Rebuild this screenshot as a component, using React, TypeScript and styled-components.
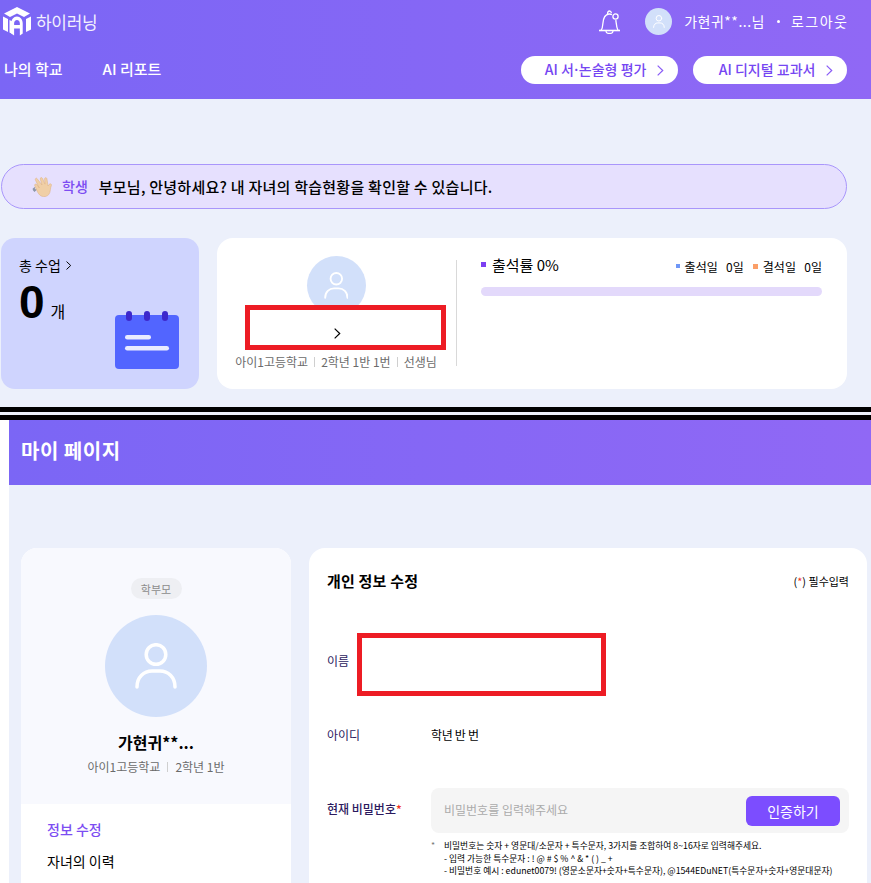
import styled, { createGlobalStyle } from 'styled-components'

const GlobalStyle = createGlobalStyle`
  html, body {
    margin: 0;
    padding: 0;
    background: #ffffff;
  }

  body {
    font-family: 'Noto Sans CJK KR', 'Noto Sans', sans-serif;
    color: #000000;
  }

  * {
    box-sizing: border-box;
  }
`

const UserIcon = ({ height, stroke }: { height: number; stroke: number }) => (
  <svg width={(height * 42) / 46} height={height} viewBox="0 0 42 46" fill="none" stroke="#ffffff" strokeWidth={stroke} strokeLinecap="round">
    <circle cx="21" cy="11.500" r="9.800" />
    <path d="M2 44c0-10 7-16 15-16h8c8 0 15 6 15 16" />
  </svg>
)

const Chevron = ({ color = '#000000', height = 11 }: { color?: string; height?: number }) => (
  <svg width={height * 0.6} height={height} viewBox="0 0 6 10" fill="none" stroke={color} strokeWidth="1.1">
    <path d="M.6.6 5.2 5 .6 9.4" />
  </svg>
)

const LogoMark = () => (
  <svg width="28" height="30" viewBox="0 0 28 30" fill="#ffffff">
    <path d="M14 0 27 6.500 21 10 14 6.500 7 10 1 6.500Z" />
    <path d="M0 9.500 5 12v13l-5-2.500ZM6.500 13l2.500 1.200v12.600l-2.500-1.300Z" />
    <path d="M28 9.500 23 12v13l5-2.500Z" />
    <path d="M14 9c4 0 7 3 7 7v10l-3.500 2v-7h-7v7L7 26V16c0-4 3-7 7-7Zm0 3.500c-2 0-3.500 1.500-3.500 3.500v1.500h7V16c0-2-1.500-3.500-3.500-3.500Z" fillRule="evenodd" transform="translate(2.500 .5) scale(.82 1)" />
  </svg>
)

const Bell = () => (
  <svg width="23" height="24" viewBox="0 0 23 24" fill="none" stroke="#ffffff" strokeWidth="1.300">
    <path d="M1 20.500h21" strokeWidth="1.600" />
    <path d="M3 20.500c1.500-2 1.700-4 1.900-7 .3-4.500 1.500-9 6.100-9.500 1.200-.1 2 .1 3 .6" />
    <path d="M17.800 10c.4 2 .4 7 2.200 10.500" />
    <path d="M8 21c0 2 1.500 2.500 3.500 2.500S15 23 15 21" />
    <path d="M9.500 4c.1-2 .9-3 2-3s1.700.8 1.900 2" />
    <circle cx="17.500" cy="6.500" r="2.600" fill="#8b66f5" />
  </svg>
)

const WaveHand = () => (
  <svg width="21" height="21" viewBox="0 0 21 21">
    <path d="M.8 13.500 3 11.500M2 15.500l2.500-2.200M1.200 14.500l1.800-1.500" stroke="#8d97a8" strokeWidth="1.200" />
    <path d="M5 2.500 10 9 8.300 3.200c-.5-1.600 1.500-2.300 2.200-.8L13 8.200l-.4-5.300c0-1.500 2-1.700 2.300-.2l1.200 7.300c.5-1 1.300-2.200 2.200-2.200 1.100 0 1.400 1 1 2-1 2.300-.8 4.600-1.500 6.800-1 3-3.800 4.400-6.600 4-3-.4-4.300-2.300-5.500-4.300L2.800 9.800c-.8-1.300 1-2.600 2-1.300L7.300 12 3.500 4.300C2.700 2.700 4.200 1.500 5 2.500Z" fill="#f0cfa6" stroke="#dcae7d" strokeWidth=".5" />
  </svg>
)

const CalendarIcon = () => (
  <svg width="64" height="58" viewBox="0 0 64 58">
    <rect y="4" width="64" height="54" rx="4" fill="#5265ff" />
    <rect x="11" width="6" height="10" rx="3" fill="#3d28cc" />
    <rect x="29" width="6" height="10" rx="3" fill="#3d28cc" />
    <rect x="47" width="6" height="10" rx="3" fill="#3d28cc" />
    <rect x="10" y="24" width="26" height="4.500" rx="2.250" fill="#e9ebff" />
    <rect x="10" y="35" width="44" height="4.500" rx="2.250" fill="#e9ebff" />
  </svg>
)

export default function App() {
  return (
    <>
      <GlobalStyle />
      <Page>
        <Dashboard>
          <Header>
            <TopRow>
              <Logo>
                <LogoMark />
                <LogoText>하이러닝</LogoText>
              </Logo>
              <UserArea>
                <BellSlot>
                  <Bell />
                </BellSlot>
                <HeaderAvatar>
                  <UserIcon height={13} stroke={3.500} />
                </HeaderAvatar>
                <UserName>가현귀**...님</UserName>
                <Dot />
                <Logout>로그아웃</Logout>
              </UserArea>
            </TopRow>
            <NavRow>
              <Nav>
                <NavItem>나의 학교</NavItem>
                <NavItem>AI 리포트</NavItem>
              </Nav>
              <Shortcuts>
                <PillLink $width={157}>
                  <span>
                    AI 서<MiddleDot>·</MiddleDot>논술형 평가
                  </span>
                  <Chevron color="#8a5cf6" />
                </PillLink>
                <PillLink $width={154}>
                  <span>AI 디지털 교과서</span>
                  <Chevron color="#8a5cf6" />
                </PillLink>
              </Shortcuts>
            </NavRow>
          </Header>

          <DashboardBody>
            <Banner>
              <WaveHand />
              <BannerRole>학생</BannerRole>
              <BannerText>부모님, 안녕하세요? 내 자녀의 학습현황을 확인할 수 있습니다.</BannerText>
            </Banner>

            <Cards>
              <CountCard>
                <CountLabel>
                  총 수업 <Chevron height={9} />
                </CountLabel>
                <CountValue>
                  <strong>0</strong>
                  <span>개</span>
                </CountValue>
                <CalendarSlot>
                  <CalendarIcon />
                </CalendarSlot>
              </CountCard>

              <SummaryCard>
                <StudentBox>
                  <StudentAvatar>
                    <UserIcon height={27} stroke={3.200} />
                  </StudentAvatar>
                  <MaskBox $left={10} $top={45} $width={201} $height={45}>
                    <MaskedChevron>
                      <Chevron height={11} />
                    </MaskedChevron>
                  </MaskBox>
                  <SchoolLine>
                    아이1고등학교<Sep />2학년 1반 1번<Sep />선생님
                  </SchoolLine>
                </StudentBox>
                <Attendance>
                  <AttendanceHead>
                    <RateLabel>
                      <Square $color="#7c3ff2" $size={5} />
                      출석률 0%
                    </RateLabel>
                    <Legend>
                      <LegendItem>
                        <Square $color="#6f97f7" $size={4} />
                        출석일 &nbsp;0일
                      </LegendItem>
                      <LegendItem>
                        <Square $color="#fb9f68" $size={5} />
                        결석일 &nbsp;0일
                      </LegendItem>
                    </Legend>
                  </AttendanceHead>
                  <RateBar />
                </Attendance>
              </SummaryCard>
            </Cards>
          </DashboardBody>
        </Dashboard>

        <BlackRule />
        <RuleGap />
        <BlackRule />

        <MyPage>
          <TitleBand>마이 페이지</TitleBand>
          <MyPageBody>
            <Sidebar>
              <ProfileBox>
                <RoleTag>학부모</RoleTag>
                <ProfileAvatar>
                  <UserIcon height={46} stroke={3.500} />
                </ProfileAvatar>
                <ProfileName>가현귀**...</ProfileName>
                <ProfileSchool>
                  아이1고등학교<Sep />2학년 1반
                </ProfileSchool>
              </ProfileBox>
              <SideMenu>
                <SideMenuItem $active>정보 수정</SideMenuItem>
                <SideMenuItem>자녀의 이력</SideMenuItem>
              </SideMenu>
            </Sidebar>

            <FormCard>
              <FormHead>
                <FormTitle>개인 정보 수정</FormTitle>
                <RequiredNote>
                  (<Star>*</Star>) 필수입력
                </RequiredNote>
              </FormHead>

              <NameRow>
                <FieldLabel>이름</FieldLabel>
                <MaskBox $left={30} $top={0} $width={249} $height={63} />
              </NameRow>

              <IdRow>
                <FieldLabel>아이디</FieldLabel>
                <FieldValue>학년 반 번</FieldValue>
              </IdRow>

              <PasswordRow>
                <FieldLabel $bold>
                  현재 비밀번호<Star>*</Star>
                </FieldLabel>
                <PasswordField>
                  <PasswordBox>
                    <Placeholder>비밀번호를 입력해주세요</Placeholder>
                    <VerifyButton>인증하기</VerifyButton>
                  </PasswordBox>
                  <Notes>
                    <NoteLine $bullet>비밀번호는 숫자 + 영문대/소문자 + 특수문자, 3가지를 조합하여 8~16자로 입력해주세요.</NoteLine>
                    <NoteLine>- 입력 가능한 특수문자 : ! @ # $ % ^ &amp; * ( ) _ +</NoteLine>
                    <NoteLine>- 비밀번호 예시 : edunet0079! (영문소문자+숫자+특수문자), @1544EDuNET(특수문자+숫자+영문대문자)</NoteLine>
                  </Notes>
                </PasswordField>
              </PasswordRow>
            </FormCard>
          </MyPageBody>
        </MyPage>
      </Page>
    </>
  )
}

const Page = styled.div`
  width: 871px;
  height: 883px;
  overflow: hidden;
  background: #ffffff;
`

const Dashboard = styled.div`
  height: 407px;
  background: #ecf0fb;
`

const Header = styled.header`
  height: 99px;
  padding: 7px 24px 0 3px;
  background: linear-gradient(90deg, #7b66f5 0%, #9068f5 100%);
  color: #ffffff;
`

const TopRow = styled.div`
  display: flex;
  align-items: center;
  justify-content: space-between;
  height: 29px;
`

const Logo = styled.div`
  display: flex;
  align-items: center;
  gap: 5px;
`

const LogoText = styled.span`
  font-size: 17px;
  line-height: 20px;
  letter-spacing: -0.3px;
  opacity: 0.9;
`

const UserArea = styled.div`
  display: flex;
  align-items: center;
`

const BellSlot = styled.div`
  display: flex;
  margin-right: 24px;
`

const HeaderAvatar = styled.div`
  display: flex;
  align-items: center;
  justify-content: center;
  width: 27px;
  height: 27px;
  margin-right: 12px;
  border-radius: 50%;
  background: #d2e0fa;
`

const UserName = styled.span`
  padding-bottom: 2px;
  font-size: 14px;
  line-height: 20px;
  letter-spacing: 0.5px;
`

const Logout = styled.span`
  margin-right: -1.500px;
  padding-bottom: 2px;
  font-size: 14px;
  line-height: 20px;
  letter-spacing: 1.500px;
`

const Dot = styled.span`
  width: 3px;
  height: 3px;
  margin: 0 11px 0 12px;
  border-radius: 50%;
  background: #ffffff;
`

const NavRow = styled.div`
  display: flex;
  align-items: center;
  justify-content: space-between;
  height: 28px;
  margin-top: 20px;
`

const Nav = styled.nav`
  display: flex;
  gap: 40px;
  padding: 0 0 3px 1px;
`

const NavItem = styled.span`
  font-size: 15px;
  font-weight: 500;
  line-height: 20px;
`

const Shortcuts = styled.div`
  display: flex;
  gap: 15px;
`

const PillLink = styled.div<{ $width: number }>`
  display: flex;
  align-items: center;
  justify-content: flex-end;
  gap: 11px;
  width: ${({ $width }) => $width}px;
  height: 28px;
  padding-right: 14px;
  border-radius: 14px;
  background: #ffffff;
  color: #7546f2;
  font-size: 14px;
  font-weight: 500;

  span {
    padding-bottom: 2px;
  }
`

const MiddleDot = styled.i`
  margin: 0 -1.500px;
  font-style: normal;
`

const DashboardBody = styled.div`
  padding: 65px 24px 0 1px;
`

const Banner = styled.div`
  display: flex;
  align-items: center;
  height: 45px;
  padding-left: 30px;
  border: 1px solid #a996fb;
  border-radius: 23px;
  background: #e6e0fe;
`

const BannerRole = styled.span`
  margin: 0 11px 0 9px;
  padding-bottom: 1px;
  color: #7c4df2;
  font-size: 14px;
  font-weight: 500;
`

const BannerText = styled.span`
  padding-bottom: 1px;
  font-size: 15px;
  font-weight: 500;
  letter-spacing: 0.25px;
`

const Cards = styled.div`
  display: flex;
  gap: 18px;
  margin-top: 29px;
`

const CountCard = styled.div`
  position: relative;
  width: 198px;
  height: 151px;
  padding: 18px 18px;
  border-radius: 14px;
  background: #cfd4fe;
`

const CountLabel = styled.div`
  display: flex;
  align-items: center;
  gap: 5px;
  font-size: 14px;
  line-height: 19px;
`

const CountValue = styled.div`
  display: flex;
  align-items: baseline;
  gap: 6px;
  margin-top: 3px;

  strong {
    font-family: 'Liberation Sans', sans-serif;
    font-size: 46px;
    line-height: 48px;
    font-weight: 700;
  }

  span {
    font-size: 16px;
  }
`

const CalendarSlot = styled.div`
  position: absolute;
  right: 20px;
  bottom: 20px;
  display: flex;
`

const SummaryCard = styled.div`
  display: flex;
  flex: 1;
  height: 151px;
  padding: 18px 25px 0 18px;
  border-radius: 16px;
  background: #ffffff;
`

const StudentBox = styled.div`
  position: relative;
  display: flex;
  flex-direction: column;
  align-items: center;
  width: 222px;
  height: 106px;
  margin-top: 4px;
  padding-right: 19px;
  border-right: 1px solid #d9d9d9;
`

const StudentAvatar = styled.div`
  display: flex;
  flex-shrink: 0;
  align-items: center;
  justify-content: center;
  width: 59px;
  height: 59px;
  margin-top: -4px;
  border-radius: 50%;
  background: #d2e0fa;
`

const MaskBox = styled.div<{ $left: number; $top: number; $width: number; $height: number }>`
  position: absolute;
  left: ${({ $left }) => $left}px;
  top: ${({ $top }) => $top}px;
  display: flex;
  align-items: center;
  justify-content: center;
  width: ${({ $width }) => $width}px;
  height: ${({ $height }) => $height}px;
  border: 5px solid #ed1c24;
  background: #ffffff;
`

const MaskedChevron = styled.span`
  display: flex;
  margin: 12px 16px 0 0;
`

const Sep = styled.i`
  width: 1px;
  height: 10px;
  margin: 0 7px;
  background: #cfcfcf;
`

const SchoolLine = styled.div`
  display: flex;
  flex-shrink: 0;
  align-items: center;
  margin-top: 38px;
  color: #6b6b6b;
  font-size: 12px;
  line-height: 18px;
  white-space: nowrap;

  ${Sep} {
    margin: 0 6px;
  }
`

const Attendance = styled.div`
  flex: 1;
  padding-left: 24px;
`

const AttendanceHead = styled.div`
  display: flex;
  align-items: center;
  justify-content: space-between;
  height: 20px;
`

const RateLabel = styled.div`
  display: flex;
  align-items: center;
  gap: 6px;
  padding-bottom: 3px;
  font-size: 15px;
`

const Legend = styled.div`
  display: flex;
  gap: 9px;
`

const LegendItem = styled.div`
  display: flex;
  align-items: center;
  gap: 5px;
  font-size: 12px;
  word-spacing: 1.500px;
  white-space: pre;
`

const Square = styled.i<{ $color: string; $size: number }>`
  width: ${({ $size }) => $size}px;
  height: ${({ $size }) => $size}px;
  background: ${({ $color }) => $color};
`

const RateBar = styled.div`
  height: 9px;
  margin-top: 11px;
  border-radius: 5px;
  background: #e3d9fb;
`

const BlackRule = styled.div`
  height: 5px;
  background: #000000;
`

const RuleGap = styled.div`
  height: 3px;
  background: #ecf0fb;
`

const MyPage = styled.div`
  margin-left: 9px;
`

const TitleBand = styled.div`
  display: flex;
  align-items: center;
  height: 65px;
  padding: 0 0 5px 12px;
  background: linear-gradient(90deg, #7b66f5 0%, #9068f5 100%);
  color: #ffffff;
  font-size: 20px;
  font-weight: 700;
  letter-spacing: 0.5px;
`

const MyPageBody = styled.div`
  display: flex;
  gap: 18px;
  height: 398px;
  padding: 63px 4px 0 12px;
  background: #ecf0fb;
`

const Sidebar = styled.aside`
  width: 270px;
  overflow: hidden;
  border-radius: 16px 16px 0 0;
  background: #ffffff;
`

const ProfileBox = styled.div`
  display: flex;
  flex-direction: column;
  align-items: center;
  height: 256px;
  padding-top: 30px;
  background: #f8f9fe;
`

const RoleTag = styled.span`
  display: flex;
  align-items: center;
  justify-content: center;
  width: 51px;
  height: 21px;
  border-radius: 11px;
  background: #eeeff3;
  color: #8c8c8c;
  font-size: 11px;
`

const ProfileAvatar = styled.div`
  display: flex;
  align-items: center;
  justify-content: center;
  width: 102px;
  height: 102px;
  margin-top: 16px;
  border-radius: 50%;
  background: #d2e0fa;
`

const ProfileName = styled.div`
  margin-top: 12px;
  font-size: 16px;
  font-weight: 700;
  line-height: 26px;
`

const ProfileSchool = styled.div`
  display: flex;
  align-items: center;
  margin-top: 3px;
  color: #6b6b6b;
  font-size: 12px;
  line-height: 18px;
`

const SideMenu = styled.ul`
  display: flex;
  flex-direction: column;
  gap: 12px;
  margin: 0;
  padding: 15px 0 0 26px;
  list-style: none;
`

const SideMenuItem = styled.li<{ $active?: boolean }>`
  color: ${({ $active }) => ($active ? '#7c4df2' : '#000000')};
  font-size: 14px;
  font-weight: ${({ $active }) => ($active ? 500 : 400)};
  line-height: 20px;
`

const FormCard = styled.section`
  flex: 1;
  padding: 21px 18px 0;
  border-radius: 16px 16px 0 0;
  background: #ffffff;
`

const FormHead = styled.div`
  display: flex;
  align-items: center;
  justify-content: space-between;
  height: 24px;
`

const FormTitle = styled.h2`
  margin: 0;
  padding-bottom: 2px;
  font-size: 15px;
  font-weight: 700;
  letter-spacing: 0.2px;
`

const RequiredNote = styled.span`
  font-size: 11px;
`

const Star = styled.span`
  color: #f0321e;
`

const NameRow = styled.div`
  position: relative;
  display: flex;
  align-items: center;
  height: 63px;
  margin-top: 40px;

  > span {
    padding-bottom: 8px;
  }
`

const FieldLabel = styled.span<{ $bold?: boolean }>`
  width: 104px;
  flex-shrink: 0;
  color: #2c1a5e;
  font-size: 12px;
  font-weight: ${({ $bold }) => ($bold ? 500 : 400)};
`

const IdRow = styled.div`
  display: flex;
  align-items: center;
  height: 20px;
  margin-top: 28px;
`

const FieldValue = styled.span`
  font-size: 12px;
  letter-spacing: -0.3px;
`

const PasswordRow = styled.div`
  display: flex;
  margin-top: 44px;

  ${FieldLabel} {
    padding-top: 12px;
  }
`

const PasswordField = styled.div`
  flex: 1;
`

const PasswordBox = styled.div`
  display: flex;
  align-items: center;
  justify-content: space-between;
  height: 45px;
  padding: 0 9px 0 13px;
  border-radius: 8px;
  background: #f5f5f5;
`

const Placeholder = styled.span`
  padding-bottom: 2px;
  color: #ababab;
  font-size: 12px;
`

const VerifyButton = styled.button`
  width: 94px;
  height: 30px;
  padding: 0;
  border: 0;
  border-radius: 6px;
  background: #7c4dff;
  color: #ffffff;
  font-family: inherit;
  font-size: 14px;
`

const Notes = styled.div`
  margin-top: 7px;
  padding-left: 13px;
`

const NoteLine = styled.div<{ $bullet?: boolean }>`
  position: relative;
  font-size: 8.750px;
  line-height: 12.500px;
  white-space: nowrap;

  &::before {
    content: ${({ $bullet }) => ($bullet ? "'*'" : 'none')};
    position: absolute;
    left: -13px;
    color: #777777;
  }
`
